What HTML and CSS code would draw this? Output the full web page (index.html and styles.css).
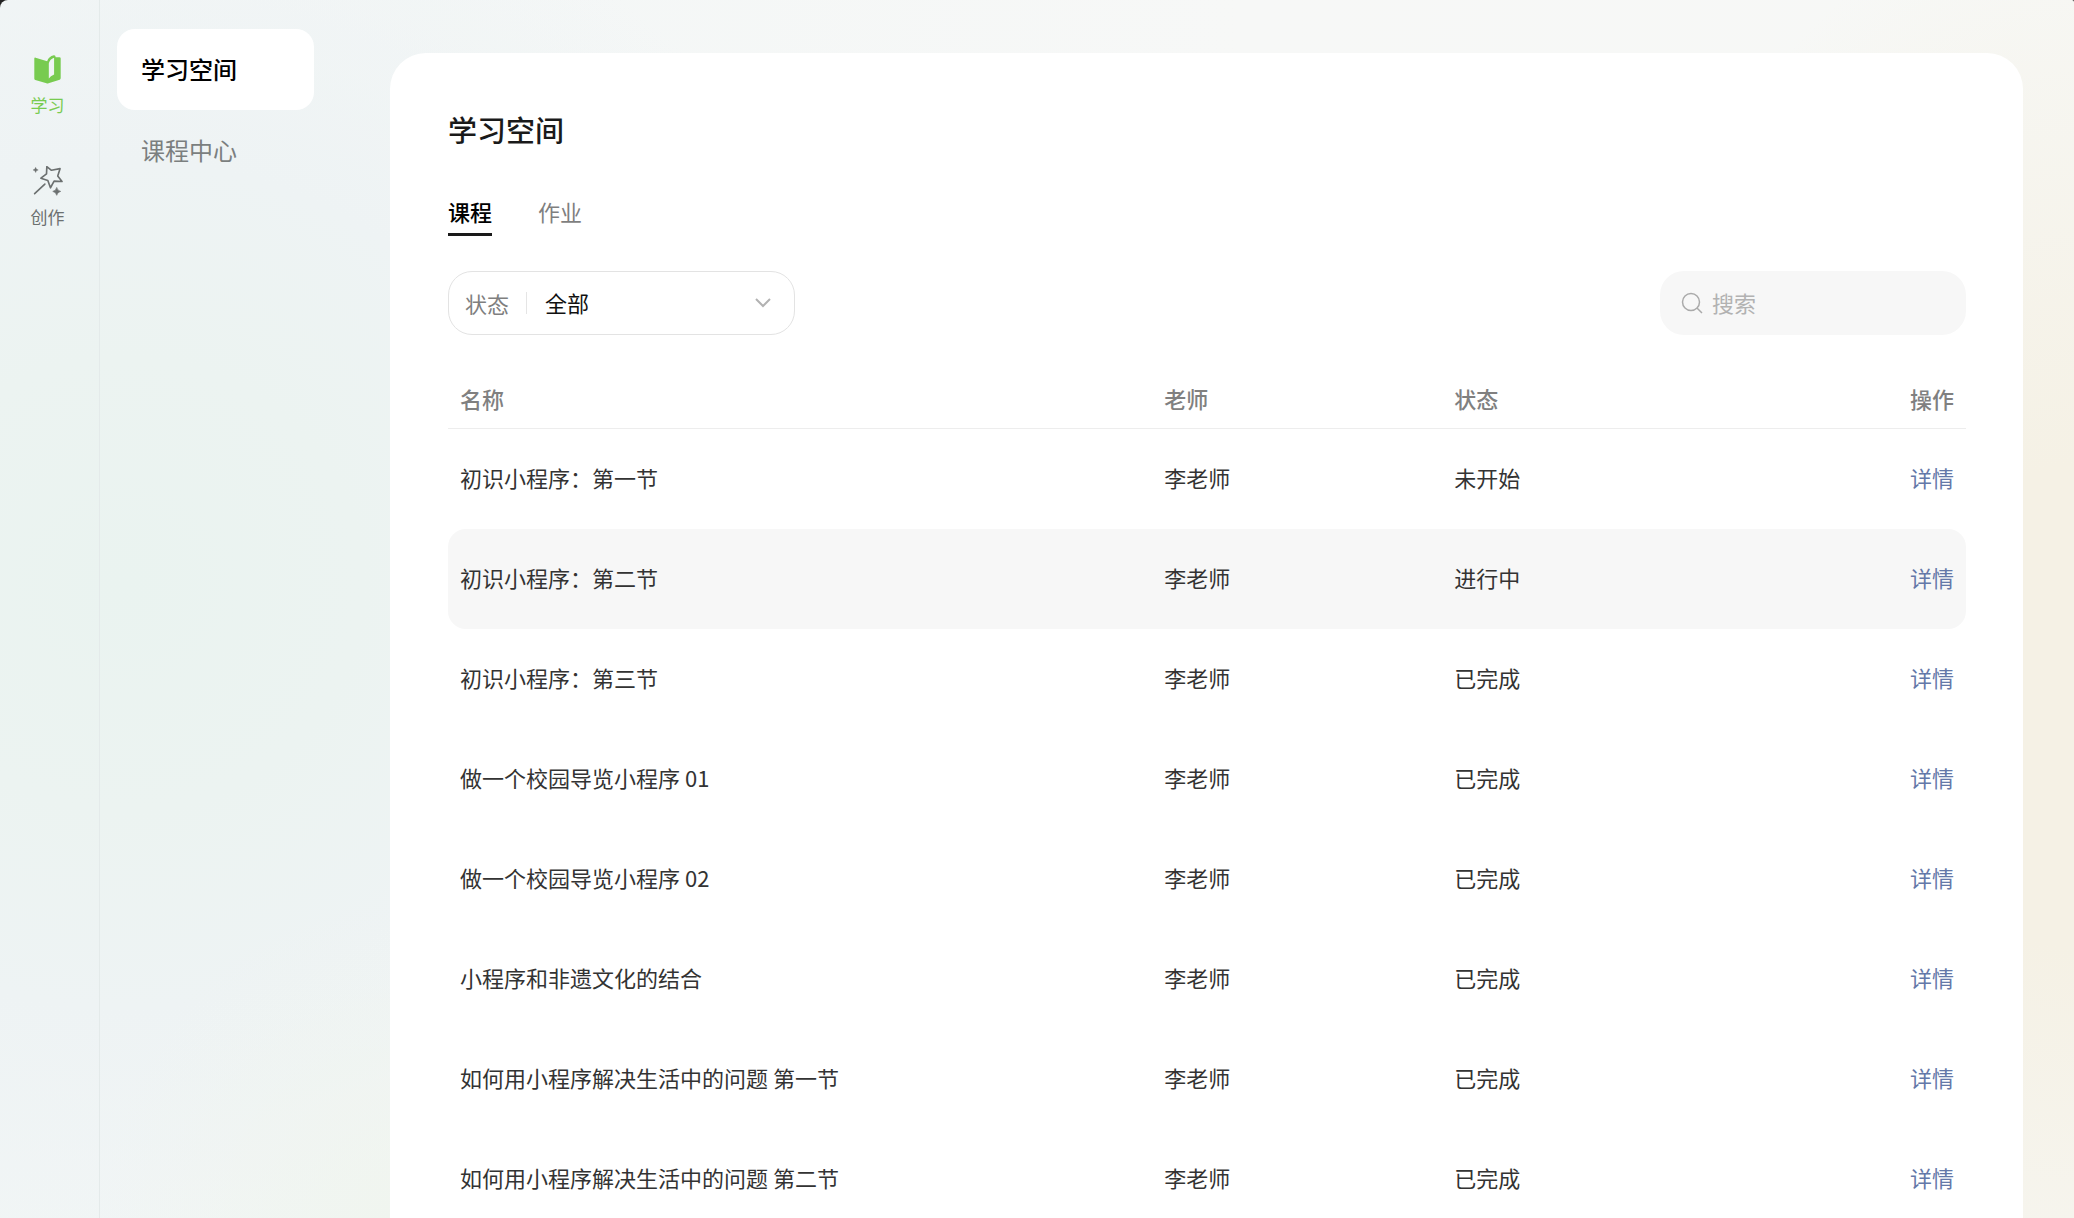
FILE: index.html
```html
<!DOCTYPE html>
<html lang="zh-CN">

<head>
    <meta charset="UTF-8">
    <meta name="viewport" content="width=device-width, initial-scale=1.0">
    <title>学习空间</title>
    <link rel="stylesheet" href="styles.css">
</head>

<body>

    <div class="app">
        <!-- Icon rail -->
        <nav class="rail">
            <a href="#" class="rail-item active">
                <svg class="rail-icon" viewBox="-4 -2 94 94" aria-hidden="true">
                    <path fill="currentColor" fill-rule="evenodd" d="M3 12Q3 8 7 9L42 20Q46 6 62 2Q67 1 68 8H79Q83 8 83 12V71Q83 75 80 76L46 87Q43 88 40 87L6 77Q3 76 3 73ZM47 27Q49 14 63 9V60Q52 64 47 72Z" />
                </svg>
                <span>学习</span>
            </a>
            <a href="#" class="rail-item">
                <svg class="rail-icon" viewBox="-2 3 94 94" aria-hidden="true">
                    <path fill="none" stroke="currentColor" stroke-width="5" stroke-linejoin="round" d="M43 5L57 16L83 11L76 33L89 50L65 49L54 69L46 47L25 40L42 27Z" />
                    <path fill="none" stroke="currentColor" stroke-width="5" stroke-linecap="round" d="M37 58L6 87" />
                    <path fill="currentColor" stroke="currentColor" d="M9 7Q10 14 17 15Q10 16 9 23Q8 16 1 15Q8 14 9 7Z" />
                    <path fill="currentColor" stroke="currentColor" stroke-width="2" d="M73 68Q75 78 85 80Q75 82 73 92Q71 82 61 80Q71 78 73 68Z" />
                </svg>
                <span>创作</span>
            </a>
        </nav>

        <!-- Section menu -->
        <nav class="menu">
            <a href="#" class="menu-item active">学习空间</a>
            <a href="#" class="menu-item">课程中心</a>
        </nav>

        <main class="panel">
            <h1>学习空间</h1>

            <div class="tabs">
                <button type="button" class="tab active">课程</button>
                <button type="button" class="tab">作业</button>
            </div>

            <div class="toolbar">
                <div class="filter">
                    <label for="status">状态</label>
                    <select id="status">
                        <option>全部</option>
                        <option>未开始</option>
                        <option>进行中</option>
                        <option>已完成</option>
                    </select>
                    <svg class="chevron" viewBox="0 0 18 12" aria-hidden="true">
                        <path fill="none" stroke="currentColor" stroke-width="2" d="M2 2L9 9L16 2" />
                    </svg>
                </div>
                <div class="search">
                    <svg class="search-icon" viewBox="0 0 22 22" aria-hidden="true">
                        <circle cx="10" cy="10" r="8.5" fill="none" stroke="currentColor" stroke-width="1.5" />
                        <path stroke="currentColor" stroke-width="1.5" d="M16 16L21 21" />
                    </svg>
                    <input type="text" placeholder="搜索" aria-label="搜索">
                </div>
            </div>

            <table class="courses">
                <thead>
                    <tr>
                        <th class="col-name">名称</th>
                        <th class="col-teacher">老师</th>
                        <th class="col-status">状态</th>
                        <th class="col-action">操作</th>
                    </tr>
                </thead>
                <tbody>
                    <tr>
                        <td>初识小程序：第一节</td>
                        <td>李老师</td>
                        <td>未开始</td>
                        <td><a href="#">详情</a></td>
                    </tr>
                    <tr class="current">
                        <td>初识小程序：第二节</td>
                        <td>李老师</td>
                        <td>进行中</td>
                        <td><a href="#">详情</a></td>
                    </tr>
                    <tr>
                        <td>初识小程序：第三节</td>
                        <td>李老师</td>
                        <td>已完成</td>
                        <td><a href="#">详情</a></td>
                    </tr>
                    <tr>
                        <td>做一个校园导览小程序 01</td>
                        <td>李老师</td>
                        <td>已完成</td>
                        <td><a href="#">详情</a></td>
                    </tr>
                    <tr>
                        <td>做一个校园导览小程序 02</td>
                        <td>李老师</td>
                        <td>已完成</td>
                        <td><a href="#">详情</a></td>
                    </tr>
                    <tr>
                        <td>小程序和非遗文化的结合</td>
                        <td>李老师</td>
                        <td>已完成</td>
                        <td><a href="#">详情</a></td>
                    </tr>
                    <tr>
                        <td>如何用小程序解决生活中的问题 第一节</td>
                        <td>李老师</td>
                        <td>已完成</td>
                        <td><a href="#">详情</a></td>
                    </tr>
                    <tr>
                        <td>如何用小程序解决生活中的问题 第二节</td>
                        <td>李老师</td>
                        <td>已完成</td>
                        <td><a href="#">详情</a></td>
                    </tr>
                </tbody>
            </table>
        </main>
    </div>

</body>

</html>
```
FILE: styles.css
```css
/* Global Styles */
* {
    box-sizing: border-box;
}

html {
    background-color: #222;
}

body {
    font-family: "Noto Sans CJK SC", sans-serif;
    font-size: 22px;
    line-height: 32px;
    color: #333;
    margin: 0;
}

a {
    text-decoration: none;
}

button,
input,
select {
    font: inherit;
    padding: 0;
    border: none;
    background: none;
}

.app {
    display: flex;
    height: 100vh;
    overflow: hidden;
    border-radius: 8px 2px 0 0;
    background:
        radial-gradient(ellipse 24% 66% at 100% 58%, #f5f1e5 0%, #f5f1e5 30%, rgba(245, 241, 229, 0) 100%),
        radial-gradient(ellipse 14% 26% at 19% 100%, #f0f5ef 0%, rgba(240, 245, 239, 0) 100%),
        radial-gradient(ellipse 38% 62% at 6% 48%, #eaf3f0 0%, #ecf3f1 30%, #eef3f4 56%, rgba(245, 247, 246, 0) 100%),
        linear-gradient(90deg, #f2f6f6 0%, #f7f8f7 60%, #f7f8f6 100%);
}

/* Icon rail */
.rail {
    flex: none;
    width: 100px;
    padding: 54px 4px 0 0;
    border-right: 1px solid #e4eaea;
}

.rail-item {
    display: flex;
    flex-direction: column;
    align-items: center;
    gap: 8px;
    margin-bottom: 49px;
    font-size: 17px;
    line-height: 24px;
    color: #6c7070;
}

.rail-item.active {
    color: #78cb50;
}

.rail-icon {
    width: 31px;
    height: 31px;
}

/* Section menu */
.menu {
    flex: none;
    width: 290px;
    padding: 29px 76px 0 17px;
}

.menu-item {
    display: block;
    padding: 21px 24px 23px;
    border-radius: 18px;
    font-size: 24px;
    line-height: 37px;
    color: #7b7f7f;
}

.menu-item.active {
    background-color: #fff;
    color: #000;
    font-weight: 500;
}

/* Main panel */
.panel {
    flex: 1;
    margin: 53px 51px 0 0;
    padding: 54px 57px 0 58px;
    border-radius: 36px 36px 0 0;
    background-color: #fff;
    overflow: hidden;
}

h1 {
    margin: 0 0 46px;
    font-size: 29px;
    line-height: 44px;
    font-weight: 500;
    color: #1a1a1a;
}

.tabs {
    display: flex;
    gap: 46px;
    margin-bottom: 35px;
}

.tab {
    padding-bottom: 7px;
    border-bottom: 3px solid transparent;
    line-height: 29px;
    color: #7f7f7f;
    cursor: pointer;
}

.tab.active {
    border-color: #1a1a1a;
    color: #000;
    font-weight: 500;
}

.toolbar {
    display: flex;
    justify-content: space-between;
    margin-bottom: 40px;
}

.filter {
    display: flex;
    align-items: center;
    position: relative;
    width: 347px;
    height: 64px;
    border: 1px solid #e3e3e3;
    border-radius: 24px;
}

.filter label {
    padding: 0 17px 0 16px;
    line-height: 22px;
    border-right: 1px solid #e5e5e5;
    color: #7f7f7f;
}

.filter select {
    flex: 1;
    height: 100%;
    padding: 0 0 3px 18px;
    appearance: none;
    color: #111;
}

.chevron {
    position: absolute;
    right: 22px;
    width: 18px;
    height: 12px;
    color: #b2b2b2;
    pointer-events: none;
}

.search {
    display: flex;
    align-items: center;
    gap: 9px;
    width: 306px;
    height: 64px;
    padding: 0 21px;
    border-radius: 24px;
    background-color: #f7f7f7;
}

.search-icon {
    flex: none;
    width: 22px;
    height: 22px;
    color: #aaa;
}

.search input {
    width: 100%;
    padding-bottom: 3px;
    outline: none;
}

.search input::placeholder {
    color: #b2b2b2;
    opacity: 1;
}

/* Course table */
.courses {
    width: 100%;
    table-layout: fixed;
    border-spacing: 0;
}

.courses th,
.courses td {
    padding: 0 12px 4px;
    text-align: left;
}

.courses th {
    height: 54px;
    padding-bottom: 8px;
    border-bottom: 1px solid #ededed;
    font-weight: 500;
    color: #808080;
}

.courses td {
    height: 100px;
}

.courses th:last-child,
.courses td:last-child {
    text-align: right;
}

.col-name {
    width: 46.4%;
}

.col-teacher {
    width: 19.1%;
}

.courses .current td {
    background-color: #f7f7f7;
}

.current td:first-child {
    border-radius: 18px 0 0 18px;
}

.current td:last-child {
    border-radius: 0 18px 18px 0;
}

.courses a {
    color: #6478a8;
}
```
